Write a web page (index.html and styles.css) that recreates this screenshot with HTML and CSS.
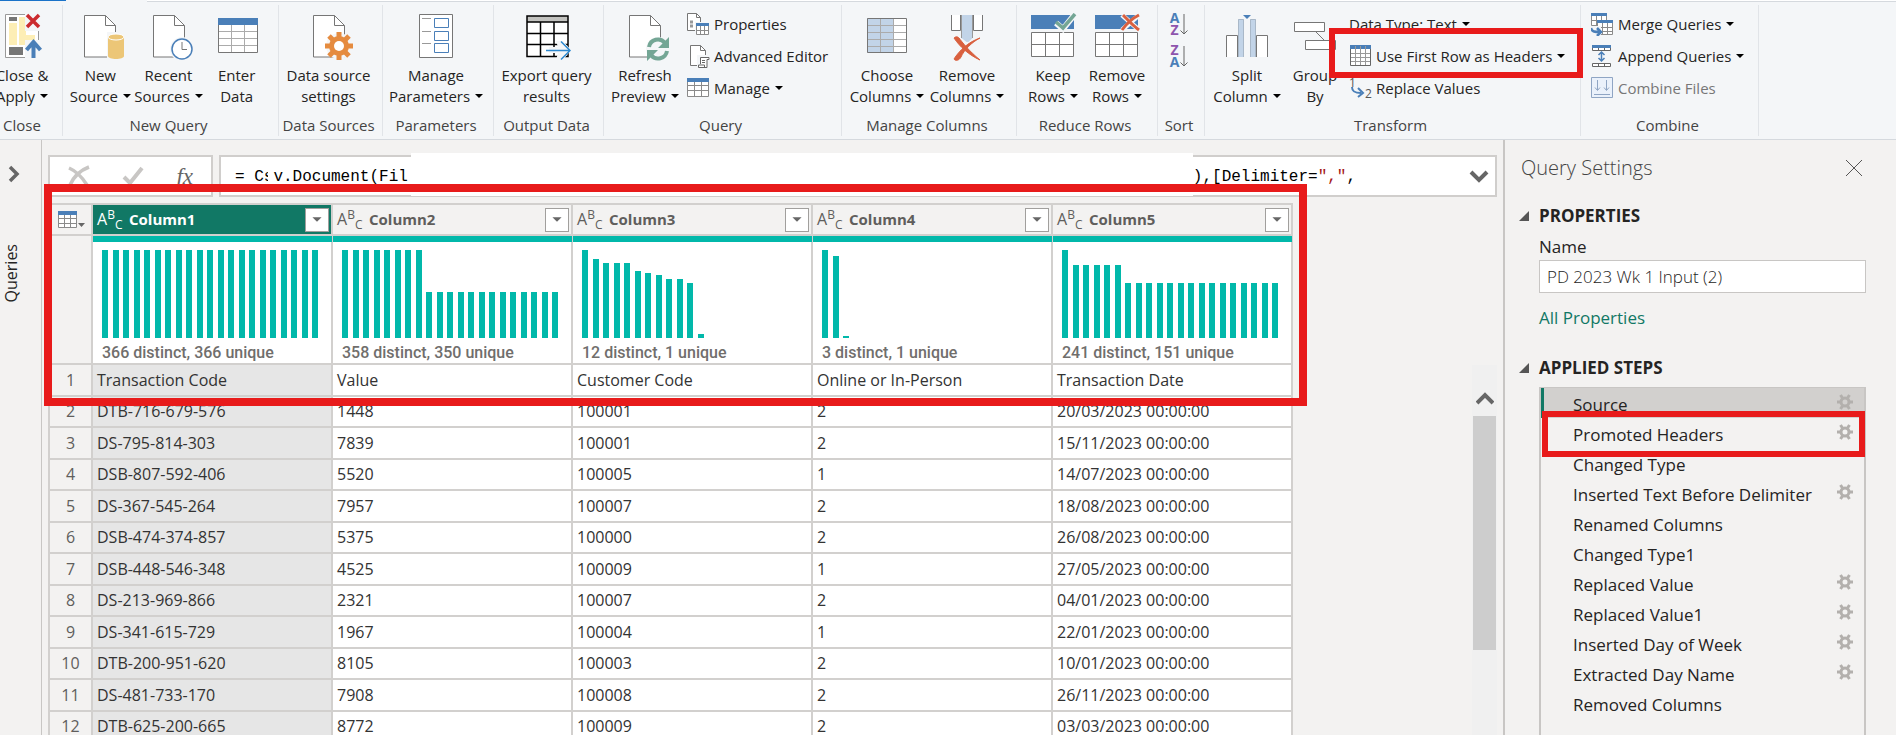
FILE: index.html
```html
<!DOCTYPE html>
<html lang="en">
<head>
    <meta charset="UTF-8">
    <meta name="viewport" content="width=device-width, initial-scale=1.0">
    <title>Power Query Editor</title>
    <link rel="stylesheet" href="styles.css">
</head>
<body>
    <!-- Shared icon shapes -->
    <svg class="sprite" width="0" height="0" aria-hidden="true">
        <symbol id="doc" viewBox="0 0 48 48">
            <path d="M8.5 2.5h21l10 10v31.5h-31z" fill="#fff" stroke="#767676"/>
            <path d="M29.5 2.5v10h10" fill="none" stroke="#767676"/>
        </symbol>
        <symbol id="gear" viewBox="0 0 16 16">
            <path d="M3.500 1l2 3M12.500 1l-2 3M3.500 15l2-3M12.500 15l-2-3M0 8h3M13 8h3" stroke="#b3b0ad" stroke-width="3"/>
            <circle cx="8" cy="8" r="4" fill="none" stroke="#b3b0ad" stroke-width="3"/>
        </symbol>
        <symbol id="rows" viewBox="0 0 48 48">
            <path d="M2 2h43v14H2z" fill="#4a7fb8"/>
            <path d="M2.500 19.500h42v24h-42zM2.500 31.500h42M16.500 19.500v24M30.500 19.500v24" fill="#fff" stroke="#767676"/>
        </symbol>
        <symbol id="filter" viewBox="0 0 24 24">
            <path d="M7 9h10l-5 5z" fill="#666"/>
        </symbol>
    </svg>

    <header class="ribbon">
        <div class="tab-line"><span class="tab-file"></span><span class="tab-home"></span><span class="tab-rest"></span></div>
        <div class="groups">
            <section class="group group-close">
                <div class="group-body">
                    <button class="btn-large">
                        <svg class="icon" viewBox="0 0 48 48">
                            <path d="M7.500 1.500h33v43h-33z" fill="#fff" stroke="#999"/>
                            <path d="M11 4h8v4h-8z" fill="#767676"/><path d="M11 10h8v22h-8zM21 4h7v28h-7zM28 22h9v10h-9z" fill="#fdeeb5"/>
                            <path d="M11 34h14v8H11z" fill="#767676"/>
                            <path d="M27 0h17v18H27zM27 27h18v20H27z" fill="#f4f6f8"/>
                            <path d="M29 2l12 12M41 2L29 14" stroke="#cb2b2f" stroke-width="3.500"/>
                            <path d="M35.500 45V31M28.500 37l7-8 7 8" fill="none" stroke="#4a7fb8" stroke-width="4"/>
                        </svg>
                        <span>Close &amp;<br>Apply<i class="caret"></i></span>
                    </button>
                </div>
                <h2>Close</h2>
            </section>

            <section class="group">
                <div class="group-body">
                    <button class="btn-large">
                        <svg class="icon" viewBox="0 0 48 48">
                            <use href="#doc"/>
                            <path d="M31 19h17v29H31z" fill="#f4f6f8"/>
                            <path d="M32 24v19c0 4 16 4 16 0V24z" fill="#ecc677"/>
                            <ellipse cx="40" cy="24" rx="8" ry="3" fill="#ecc677" stroke="#fff"/>
                        </svg>
                        <span>New<br>Source<i class="caret"></i></span>
                    </button>
                    <button class="btn-large">
                        <svg class="icon" viewBox="0 0 48 48">
                            <use href="#doc"/>
                            <circle cx="37" cy="36" r="12" fill="#f4f6f8"/>
                            <circle cx="37" cy="36" r="10" fill="#fff" stroke="#4a7fb8" stroke-width="1.500"/>
                            <path d="M37 29v7.500h5" fill="none" stroke="#767676"/>
                        </svg>
                        <span>Recent<br>Sources<i class="caret"></i></span>
                    </button>
                    <button class="btn-large">
                        <svg class="icon" viewBox="0 0 48 48">
                            <path d="M5.500 11.500h39v28h-39z" fill="#fff" stroke="#767676"/>
                            <path d="M6 18.500h38M6 25.500h38M6 32.500h38M18.500 12v27M31.500 12v27" stroke="#ababab"/>
                            <path d="M5 5h40v7H5z" fill="#4a7fb8"/>
                        </svg>
                        <span>Enter<br>Data</span>
                    </button>
                </div>
                <h2>New Query</h2>
            </section>

            <section class="group">
                <div class="group-body">
                    <button class="btn-large">
                        <svg class="icon" viewBox="0 0 48 48">
                            <use href="#doc"/>
                            <circle cx="34" cy="33" r="13" fill="#f4f6f8"/>
                            <g stroke="#e58b3f" stroke-width="5"><path d="M34 19v28M20 33h28M24 23l20 20M44 23L24 43"/></g>
                            <circle cx="34" cy="33" r="10" fill="#e58b3f"/><circle cx="34" cy="33" r="5" fill="#fff"/>
                        </svg>
                        <span>Data source<br>settings</span>
                    </button>
                </div>
                <h2>Data Sources</h2>
            </section>

            <section class="group">
                <div class="group-body">
                    <button class="btn-large">
                        <svg class="icon" viewBox="0 0 48 48">
                            <path d="M7.500 1.500h33v43h-33z" fill="#fff" stroke="#767676"/>
                            <path d="M10 5.500h9M10 18.500h9M10 30.500h9" stroke="#999"/>
                            <path d="M22.500 5.500h14v9h-14zM22.500 18.500h14v9h-14zM22.500 30.500h14v9h-14z" fill="none" stroke="#4a7fb8"/>
                        </svg>
                        <span>Manage<br>Parameters<i class="caret"></i></span>
                    </button>
                </div>
                <h2>Parameters</h2>
            </section>

            <section class="group">
                <div class="group-body">
                    <button class="btn-large">
                        <svg class="icon" viewBox="0 0 48 48">
                            <path d="M4 3h41v40H4z" fill="#fff"/><path d="M4 3h41v6H4z" fill="#c2c2bf"/>
                            <path d="M4 3h41v40.500H4zM4 9h41M4 20.500h41M4 31.500h41M17.500 9v34M31 9v34" fill="none" stroke="#000" stroke-width="1.500"/>
                            <path d="M26 34h9l-2-6h7l8 9-8 10h-7l2-7h-9z" fill="#f4f6f8"/>
                            <path d="M23 37.500h24M38 28.500l9 9-9 9" fill="none" stroke="#2b88cf" stroke-width="1.500"/>
                        </svg>
                        <span>Export query<br>results</span>
                    </button>
                </div>
                <h2>Output Data</h2>
            </section>

            <section class="group group-query">
                <div class="group-body">
                    <button class="btn-large">
                        <svg class="icon" viewBox="0 0 48 48">
                            <use href="#doc"/>
                            <circle cx="37" cy="36" r="12" fill="#f4f6f8"/>
                            <path d="M28 34a9 9 0 0 1 16-4M46 38a9 9 0 0 1-16 4" fill="none" stroke="#74a695" stroke-width="4"/>
                            <path d="M48 24v11H37zM26 48V37h11z" fill="#74a695"/>
                        </svg>
                        <span>Refresh<br>Preview<i class="caret"></i></span>
                    </button>
                    <div class="stack">
                        <button class="btn-small">
                            <svg class="icon-small" viewBox="0 0 24 24">
                                <path d="M.5 1.500h9l4 4v13H.5z" fill="#fff" stroke="#767676"/><path d="M9.500 1.500v4h4" fill="none" stroke="#767676"/>
                                <path d="M3 10h3M3 14h3" stroke="#999" stroke-width="3"/>
                                <path d="M8 10h16v14H8z" fill="#f4f6f8"/>
                                <path d="M9.500 12.500h12v10h-12zM9.500 18.500h12M13.500 14v9M17.500 14v9" fill="#fff" stroke="#8a8a8a"/>
                                <path d="M9 11h13v3H9z" fill="#4a7fb8"/>
                            </svg>
                            Properties
                        </button>
                        <button class="btn-small">
                            <svg class="icon-small" viewBox="0 0 24 24">
                                <path d="M3.500 1.500h10l5 5v15h-15z" fill="#fff" stroke="#767676"/><path d="M13.500 1.500v5h5" fill="none" stroke="#767676"/>
                                <path d="M10 11h14v13H10z" fill="#f4f6f8"/>
                                <path d="M13.500 20V13.500h8.500v2h-2V23.500h-8.500v-2.500h6v2.500M15 16.500h3M15 18.500h3" fill="#fff" stroke="#666"/>
                            </svg>
                            Advanced Editor
                        </button>
                        <button class="btn-small">
                            <svg class="icon-small" viewBox="0 0 24 24">
                                <path d="M.5 3.500h21v17H.5zM1 9.500h20M1 14.500h20M7.500 5v15M14.500 5v15" fill="#fff" stroke="#8a8a8a"/>
                                <path d="M0 2h22v4H0z" fill="#4a7fb8"/>
                            </svg>
                            Manage<i class="caret"></i>
                        </button>
                    </div>
                </div>
                <h2>Query</h2>
            </section>

            <section class="group group-columns">
                <div class="group-body">
                    <button class="btn-large">
                        <svg class="icon" viewBox="0 0 48 48">
                            <path d="M4 5h27v35H4z" fill="#c2d4e8"/><path d="M31 5h13v35H31z" fill="#fff"/>
                            <path d="M4 12.500h40M4 19.500h40M4 26.500h40M4 33.500h40M17.500 5v35M30.500 5v35" stroke="#ababab"/>
                            <path d="M4.500 5.500h39v34h-39z" fill="none" stroke="#767676"/>
                        </svg>
                        <span>Choose<br>Columns<i class="caret"></i></span>
                    </button>
                    <button class="btn-large">
                        <svg class="icon" viewBox="0 0 48 48">
                            <path d="M8.500 2v15.500h9V2M30.500 2v15.500h9V2" fill="#fff" stroke="#767676"/>
                            <path d="M18.500 2v23l5 4h2l4-4V2z" fill="#c2d4e8"/>
                            <path d="M18.500 2v23M29.500 2v23" stroke="#999"/>
                            <path d="M11 25c2-2 4-1 5 0 3 4 10 13 21 22-11-5-20-13-26-22zM37 25c-8 4-16 12-19 19-2 4-6 4-7 2 5-8 14-17 26-21z" fill="#d9603f" stroke="#d9603f"/>
                        </svg>
                        <span>Remove<br>Columns<i class="caret"></i></span>
                    </button>
                </div>
                <h2>Manage Columns</h2>
            </section>

            <section class="group group-rows">
                <div class="group-body">
                    <button class="btn-large">
                        <svg class="icon" viewBox="0 0 48 48">
                            <use href="#rows"/>
                            <path d="M27 10l7 6L46 1" fill="none" stroke="#f4f6f8" stroke-width="6"/>
                            <path d="M27 9l7 6L46 1" fill="none" stroke="#74a695" stroke-width="3.500"/>
                        </svg>
                        <span>Keep<br>Rows<i class="caret"></i></span>
                    </button>
                    <button class="btn-large">
                        <svg class="icon" viewBox="0 0 48 48">
                            <use href="#rows"/>
                            <path d="M29 2l17 15M46 2L29 17" stroke="#f4f6f8" stroke-width="5"/>
                            <path d="M30 2c4 4 9 10 16 15M46 2c-8 4-12 8-17 15" fill="none" stroke="#d9603f" stroke-width="3"/>
                        </svg>
                        <span>Remove<br>Rows<i class="caret"></i></span>
                    </button>
                </div>
                <h2>Reduce Rows</h2>
            </section>

            <section class="group">
                <div class="group-body">
                    <div class="stack">
                        <button class="btn-small btn-sort" aria-label="Sort ascending">
                            <span class="letters"><b class="letter-a">A</b><b class="letter-z">Z</b></span>
                            <svg class="arrow" viewBox="0 0 8 24"><path d="M4 2v20M.5 18.500L4 22l3.500-3.500" fill="none" stroke="#666"/></svg>
                        </button>
                        <button class="btn-small btn-sort" aria-label="Sort descending">
                            <span class="letters"><b class="letter-z">Z</b><b class="letter-a">A</b></span>
                            <svg class="arrow" viewBox="0 0 8 24"><path d="M4 2v20M.5 18.500L4 22l3.500-3.500" fill="none" stroke="#666"/></svg>
                        </button>
                    </div>
                </div>
                <h2>Sort</h2>
            </section>

            <section class="group group-transform">
                <div class="group-body">
                    <button class="btn-large">
                        <svg class="icon" viewBox="0 0 48 48">
                            <path d="M3.500 44V22.500h11V44M33.500 44V22.500h11V44" fill="#fff" stroke="#767676"/>
                            <path d="M15 6h6v38h-6zM27 6h6v38h-6z" fill="#c2d4e8"/>
                            <path d="M15.500 44V6.500h5V44M27.500 44V6.500h5V44" fill="none" stroke="#a9b8c8"/>
                            <path d="M20 2h8l-4 4z" fill="#4a7fb8"/>
                        </svg>
                        <span>Split<br>Column<i class="caret"></i></span>
                    </button>
                    <button class="btn-large">
                        <svg class="icon" viewBox="0 0 48 48">
                            <path d="M3.500 9.500h30v9h-30zM14.500 27.500h30v9h-30z" fill="#fff" stroke="#767676"/>
                            <path d="M25 19l8 8" stroke="#767676"/>
                        </svg>
                        <span>Group<br>By</span>
                    </button>
                    <div class="stack">
                        <button class="btn-small">Data Type: Text<i class="caret"></i></button>
                        <button class="btn-small">
                            <svg class="icon-small" viewBox="0 0 24 24">
                                <path d="M1.500 1.500h20v20h-20z" fill="#fff" stroke="#666"/>
                                <path d="M1 1h21v4H1z" fill="#4a7fb8"/>
                                <path d="M2 9.500h19M2 13.500h19M2 17.500h19M6.500 2v19M11.500 2v19M16.500 2v19" stroke="#999"/>
                            </svg>
                            Use First Row as Headers<i class="caret"></i>
                        </button>
                        <button class="btn-small">
                            <svg class="icon-small" viewBox="0 0 24 24">
                                <text x="0" y="11" class="digit">1</text><text x="16" y="22" class="digit">2</text>
                                <path d="M3 11c0 4 2 6 9 6M9 12l5 5-5 4" fill="none" stroke="#4a7fb8" stroke-width="2"/>
                            </svg>
                            Replace Values
                        </button>
                    </div>
                </div>
                <h2>Transform</h2>
                <div class="mark mark-headers"></div>
            </section>

            <section class="group group-combine">
                <div class="group-body">
                    <div class="stack">
                        <button class="btn-small">
                            <svg class="icon-small" viewBox="0 0 24 24">
                                <path d="M.5 2.500h15v11H.5zM1 8.500h14M5.500 4v10M10.500 4v10" fill="#fff" stroke="#8a8a8a"/><path d="M0 1h16v3H0z" fill="#4a7fb8"/>
                                <path d="M6.500 9.500h15v13h-15zM7 15.500h14M7 19.500h14M11.500 10v13M16.500 10v13" fill="#fff" stroke="#8a8a8a"/><path d="M6 8h16v3H6z" fill="#4a7fb8"/>
                                <path d="M0 14h10v9H0z" fill="#f4f6f8"/>
                                <path d="M0 16c1 4 4 4 9 4M6 16l4 4-4 4" fill="none" stroke="#4a7fb8" stroke-width="2.500"/>
                            </svg>
                            Merge Queries<i class="caret"></i>
                        </button>
                        <button class="btn-small">
                            <svg class="icon-small" viewBox="0 0 24 24">
                                <path d="M1.500 3.500h18v3h-18zM7.500 3v3M13.500 3v3M1.500 19.500h18v3h-18zM7.500 19v4M13.500 19v4" fill="#fff" stroke="#666"/>
                                <path d="M1 1h19v3H1z" fill="#4a7fb8"/>
                                <path d="M10.500 8v9M7.500 11l3-3 3 3M7.500 14l3 3 3-3" fill="none" stroke="#4a7fb8" stroke-width="1.500"/>
                            </svg>
                            Append Queries<i class="caret"></i>
                        </button>
                        <button class="btn-small" disabled>
                            <svg class="icon-small" viewBox="0 0 24 24">
                                <path d="M.5 1.500h21v20H.5z" fill="#eaf1fb" stroke="#8fa5c4"/>
                                <path d="M6.500 4v10M4 11.500l2.500 3 2.500-3M15.500 4v10M13 11.500l2.500 3 2.500-3M3 18.500h16" fill="none" stroke="#8fa5c4"/>
                            </svg>
                            Combine Files
                        </button>
                    </div>
                </div>
                <h2>Combine</h2>
            </section>
        </div>
    </header>

    <div class="workspace">
        <nav class="rail">
            <button class="rail-toggle" aria-label="Expand queries">
                <svg width="12" height="18" viewBox="0 0 12 18"><path d="M2 2l7 7-7 7" fill="none" stroke="#666" stroke-width="3.500"/></svg>
            </button>
            <span class="rail-title">Queries</span>
        </nav>

        <main class="main">
            <div class="formula-bar">
                <div class="formula-actions">
                    <button aria-label="Cancel">
                        <svg width="22" height="22" viewBox="0 0 22 22"><path d="M1 3c7 3 13 9 18 17M21 2C13 5 6 11 2 20" fill="none" stroke="#c8c6c4" stroke-width="3.500"/></svg>
                    </button>
                    <button aria-label="Apply">
                        <svg width="22" height="22" viewBox="0 0 22 22"><path d="M2 12l6 6L20 3" fill="none" stroke="#c8c6c4" stroke-width="4"/></svg>
                    </button>
                    <button class="fx" aria-label="Add step">fx</button>
                </div>
                <div class="formula" role="textbox" aria-label="Formula">
                    <code>= Cs<span class="gap"></span>v.Document(Fil</code>
                    <span class="blank"></span>
                    <code>),[Delimiter=<em>","</em>,</code>
                    <button class="formula-expand" aria-label="Expand formula">
                        <svg width="20" height="14" viewBox="0 0 20 14"><path d="M2 3l8 8 8-8" fill="none" stroke="#666" stroke-width="4"/></svg>
                    </button>
                </div>
            </div>

            <div class="preview">
                <table class="data">
                    <thead>
                        <tr class="names">
                            <th class="num">
                                <button class="corner" aria-label="Table menu">
                                    <svg width="28" height="20" viewBox="0 0 28 20">
                                        <path d="M.5 2.500h18v15H.5zM1 8.500h17M1 13.500h17M6.500 4v13M12.500 4v13" fill="#fff" stroke="#8a8a8a"/>
                                        <path d="M0 1h19v4H0z" fill="#4a7fb8"/><path d="M20 13h7l-3.500 4z" fill="#666"/>
                                    </svg>
                                </button>
                            </th>
                            <th class="selected"><div class="name"><span class="abc">A<sup>B</sup><sub>C</sub></span>Column1<button aria-label="Filter Column1"><svg><use href="#filter"/></svg></button></div></th>
                            <th><div class="name"><span class="abc">A<sup>B</sup><sub>C</sub></span>Column2<button aria-label="Filter Column2"><svg><use href="#filter"/></svg></button></div></th>
                            <th><div class="name"><span class="abc">A<sup>B</sup><sub>C</sub></span>Column3<button aria-label="Filter Column3"><svg><use href="#filter"/></svg></button></div></th>
                            <th><div class="name"><span class="abc">A<sup>B</sup><sub>C</sub></span>Column4<button aria-label="Filter Column4"><svg><use href="#filter"/></svg></button></div></th>
                            <th><div class="name"><span class="abc">A<sup>B</sup><sub>C</sub></span>Column5<button aria-label="Filter Column5"><svg><use href="#filter"/></svg></button></div></th>
                        </tr>
                        <tr class="profile">
                            <td class="num"></td>
                            <td><div class="quality"></div><div class="bars"></div><p>366 distinct, 366 unique</p></td>
                            <td><div class="quality"></div><div class="bars"></div><p>358 distinct, 350 unique</p></td>
                            <td><div class="quality"></div><div class="bars"></div><p>12 distinct, 1 unique</p></td>
                            <td><div class="quality"></div><div class="bars"></div><p>3 distinct, 1 unique</p></td>
                            <td><div class="quality"></div><div class="bars"></div><p>241 distinct, 151 unique</p></td>
                        </tr>
                    </thead>
                    <tbody>
                        <tr><th class="num">1</th><td>Transaction Code</td><td>Value</td><td>Customer Code</td><td>Online or In-Person</td><td>Transaction Date</td></tr>
                        <tr><th class="num">2</th><td>DTB-716-679-576</td><td>1448</td><td>100001</td><td>2</td><td>20/03/2023 00:00:00</td></tr>
                        <tr><th class="num">3</th><td>DS-795-814-303</td><td>7839</td><td>100001</td><td>2</td><td>15/11/2023 00:00:00</td></tr>
                        <tr><th class="num">4</th><td>DSB-807-592-406</td><td>5520</td><td>100005</td><td>1</td><td>14/07/2023 00:00:00</td></tr>
                        <tr><th class="num">5</th><td>DS-367-545-264</td><td>7957</td><td>100007</td><td>2</td><td>18/08/2023 00:00:00</td></tr>
                        <tr><th class="num">6</th><td>DSB-474-374-857</td><td>5375</td><td>100000</td><td>2</td><td>26/08/2023 00:00:00</td></tr>
                        <tr><th class="num">7</th><td>DSB-448-546-348</td><td>4525</td><td>100009</td><td>1</td><td>27/05/2023 00:00:00</td></tr>
                        <tr><th class="num">8</th><td>DS-213-969-866</td><td>2321</td><td>100007</td><td>2</td><td>04/01/2023 00:00:00</td></tr>
                        <tr><th class="num">9</th><td>DS-341-615-729</td><td>1967</td><td>100004</td><td>1</td><td>22/01/2023 00:00:00</td></tr>
                        <tr><th class="num">10</th><td>DTB-200-951-620</td><td>8105</td><td>100003</td><td>2</td><td>10/01/2023 00:00:00</td></tr>
                        <tr><th class="num">11</th><td>DS-481-733-170</td><td>7908</td><td>100008</td><td>2</td><td>26/11/2023 00:00:00</td></tr>
                        <tr><th class="num">12</th><td>DTB-625-200-665</td><td>8772</td><td>100009</td><td>2</td><td>03/03/2023 00:00:00</td></tr>
                    </tbody>
                </table>
                <div class="scrollbar">
                    <svg width="18" height="14" viewBox="0 0 18 14"><path d="M1 12l8-8 8 8" fill="none" stroke="#666" stroke-width="4"/></svg>
                    <div class="thumb"></div>
                </div>
                <div class="mark mark-table"></div>
            </div>
        </main>

        <aside class="settings">
            <div class="settings-head">
                <h1>Query Settings</h1>
                <button aria-label="Close">
                    <svg width="18" height="18" viewBox="0 0 18 18"><path d="M1 1l16 16M17 1L1 17" stroke="#555"/></svg>
                </button>
            </div>
            <h3>PROPERTIES</h3>
            <div class="properties">
                <label for="query-name">Name</label>
                <input id="query-name" type="text" value="PD 2023 Wk 1 Input (2)">
                <a href="#">All Properties</a>
            </div>
            <h3>APPLIED STEPS</h3>
            <ul class="steps">
                <li class="current">Source<svg><use href="#gear"/></svg></li>
                <li>Promoted Headers<svg><use href="#gear"/></svg><div class="mark mark-step"></div></li>
                <li>Changed Type</li>
                <li>Inserted Text Before Delimiter<svg><use href="#gear"/></svg></li>
                <li>Renamed Columns</li>
                <li>Changed Type1</li>
                <li>Replaced Value<svg><use href="#gear"/></svg></li>
                <li>Replaced Value1<svg><use href="#gear"/></svg></li>
                <li>Inserted Day of Week<svg><use href="#gear"/></svg></li>
                <li>Extracted Day Name<svg><use href="#gear"/></svg></li>
                <li>Removed Columns</li>
            </ul>
        </aside>
    </div>

    <script>
        // Bar heights of each column distribution, in pixels
        const distributions = [
            Array(21).fill(88),
            [...Array(8).fill(88), ...Array(13).fill(46)],
            [88, 79, 75, 75, 75, 67, 65, 63, 59, 59, 55, 4],
            [88, 82, 2],
            [88, ...Array(5).fill(73), ...Array(15).fill(55)]
        ];

        document.querySelectorAll('.bars').forEach((chart, i) => {
            distributions[i].forEach((height) => {
                const bar = document.createElement('span');
                bar.style.height = height + 'px';
                chart.appendChild(bar);
            });
        });
    </script>
</body>
</html>
```

FILE: styles.css
```css
* {
    box-sizing: border-box;
}
body {
    font-family: "Open Sans", "Noto Sans", sans-serif;
    font-size: 15px;
    line-height: 21px;
    color: #252423;
    background-color: #f3f2f1;
    margin: 0;
    height: 100vh;
    display: flex;
    flex-direction: column;
    overflow: hidden;
}
button {
    font: inherit;
    color: inherit;
    background: none;
    border: none;
    padding: 0;
    cursor: pointer;
}
h1, h2, h3, p, ul {
    margin: 0;
    padding: 0;
}
svg {
    display: block;
    flex: none;
}
.sprite {
    position: absolute;
}
.caret {
    display: inline-block;
    border: 4px solid transparent;
    border-top-color: #000;
    border-bottom: none;
    margin-left: 5px;
    vertical-align: 4px;
}

/* Red highlight frames */
.mark {
    position: absolute;
    border: 6px solid #e81b1b;
    pointer-events: none;
}
.mark-headers {
    left: 124px;
    top: 23px;
    width: 254px;
    height: 50px;
    z-index: 1;
}
.mark-table {
    left: -4px;
    top: -19px;
    width: 1263px;
    height: 222px;
    border-width: 8px;
}
.mark-step {
    left: 1px;
    right: -1px;
    top: -7px;
    height: 46px;
}

/* Ribbon */
.ribbon {
    background-color: #f4f6f8;
    border-bottom: 1px solid #d5d9de;
}
.tab-line {
    display: flex;
    height: 2px;
}
.tab-file {
    width: 66px;
    border-top: 1px solid #1a73c9;
}
.tab-home {
    width: 81px;
}
.tab-rest {
    flex: 1;
    background-color: #fff;
    border-bottom: 1px solid #d5d9de;
}
.groups {
    display: grid;
    grid-template-columns: 63px 216px 104px 111px 110px 238px 175px 141px 47px 376px 178px;
    padding: 3px 0;
}
.group {
    position: relative;
    height: 131px;
    padding-right: 4px;
    border-right: 1px solid #e1e4e8;
}
.group h2 {
    font-size: 15px;
    font-weight: normal;
    color: #444;
    text-align: center;
    white-space: nowrap;
}
.group-body {
    display: flex;
    justify-content: center;
    height: 110px;
}
.group-close {
    padding-right: 18px;
    overflow: hidden;
}
.btn-large {
    flex: none;
    display: flex;
    flex-direction: column;
    align-items: center;
    gap: 4px;
    min-width: 68px;
    padding-top: 8px;
    white-space: nowrap;
}
.group-columns .btn-large {
    min-width: 80px;
}
.group-rows .btn-large {
    min-width: 64px;
}
.icon {
    width: 48px;
    height: 48px;
}
.stack {
    display: flex;
    flex-direction: column;
    padding-top: 3px;
}
.btn-small {
    display: flex;
    align-items: center;
    height: 32px;
    white-space: nowrap;
}
.btn-small:disabled {
    color: #777;
}
.icon-small {
    width: 24px;
    height: 24px;
    margin-right: 3px;
}
.group-query .group-body,
.group-transform .group-body,
.group-combine .group-body {
    justify-content: flex-start;
}
.group-query .group-body {
    padding-left: 7px;
    gap: 8px;
}
.group-transform .group-body {
    padding-left: 8px;
}
.group-combine .group-body {
    padding-left: 10px;
}
.btn-sort {
    gap: 1px;
}
.letters {
    display: flex;
    flex-direction: column;
    font-size: 14px;
    line-height: 12px;
}
.letter-a {
    color: #4a7fb8;
}
.letter-z {
    color: #8e55ad;
}
.arrow {
    width: 8px;
    height: 24px;
}
.digit {
    font-size: 12px;
    fill: #555;
}

/* Workspace */
.workspace {
    flex: 1;
    min-height: 0;
    display: grid;
    grid-template-columns: 42px 1fr 393px;
}
.rail {
    display: flex;
    flex-direction: column;
    align-items: flex-start;
    gap: 61px;
    padding: 25px 0 0 4px;
    border-right: 1px solid #c8c6c4;
}
.rail-toggle {
    padding-left: 4px;
}
.rail-title {
    writing-mode: vertical-rl;
    transform: rotate(180deg);
    font-size: 16px;
    line-height: 14px;
}
.main {
    min-width: 0;
    padding: 15px 6px 0;
    overflow: hidden;
}
.formula-bar {
    display: flex;
    gap: 6px;
    margin-bottom: 6px;
}
.formula-actions {
    display: flex;
    align-items: center;
    justify-content: space-between;
    width: 165px;
    height: 42px;
    padding: 0 18px;
    background-color: #fff;
    border: 2px solid #d0cecc;
}
.fx {
    font-family: "Liberation Serif", serif;
    font-size: 23px;
    font-style: italic;
    color: #666;
}
.formula {
    flex: 1;
    display: flex;
    align-items: center;
    height: 42px;
    padding: 0 6px 0 14px;
    background-color: #fff;
    border: 2px solid #d0cecc;
}
.formula code {
    padding-top: 3px;
    font-family: "Liberation Mono", monospace;
    font-size: 16px;
    color: #000;
    white-space: pre;
}
.formula em {
    font-style: normal;
    color: #a31515;
}
.gap {
    display: inline-block;
    width: 5px;
    height: 16px;
    margin-left: -5px;
    background-color: #fff;
    vertical-align: middle;
}
.blank {
    width: 782px;
    height: 43px;
    margin: -4px 0 0 3px;
    background-color: #fff;
}
.formula-expand {
    margin-left: auto;
}

/* Data preview */
.preview {
    position: relative;
    display: flex;
    align-items: flex-start;
    justify-content: space-between;
}
.data {
    table-layout: fixed;
    width: 1245px;
    border-collapse: separate;
    border-spacing: 0;
    border: solid #d2d0ce;
    border-width: 2px 0 0 2px;
}
.data th,
.data td {
    height: 31px;
    padding: 0 4px;
    border: solid #d2d0ce;
    border-width: 0 2px 2px 0;
    text-align: left;
    background-color: #fff;
    color: #333;
}
.data td {
    font-size: 16px;
}
.data tbody tr:nth-child(odd) td {
    height: 32px;
}
.data tbody td:nth-child(2) {
    background-color: #e6e6e6;
}
.data .num {
    width: 43px;
    padding: 0;
    background-color: #f3f2f1;
    color: #605e5c;
    font-size: 16px;
    font-weight: normal;
    text-align: center;
}
.data .names th {
    background-color: #f3f2f1;
    color: #605e5c;
}
.data .names .selected {
    background-color: #117865;
    color: #fff;
}
.corner {
    display: block;
    margin-left: 8px;
}
.name {
    display: flex;
    align-items: center;
    height: 29px;
    margin-right: -2px;
}
.name button {
    margin-left: auto;
    background-color: #fff;
    border: 1px solid #a19f9d;
}
.name svg {
    width: 22px;
    height: 22px;
}
.abc {
    width: 32px;
    font-size: 16px;
    font-weight: normal;
}
.abc sup,
.abc sub {
    font-size: 12px;
    line-height: 0;
}
.abc sup {
    vertical-align: 6px;
}
.abc sub {
    vertical-align: -4px;
}
.data .profile td {
    height: 129px;
    padding: 0;
    vertical-align: top;
}
.quality {
    height: 6px;
    margin-right: -1px;
    background-color: #01b8aa;
}
.bars {
    display: grid;
    grid-template-columns: repeat(21, 6px);
    justify-content: space-between;
    align-items: end;
    width: 216px;
    height: 88px;
    margin: 8px 9px 4px;
}
.bars span {
    background-color: #01b8aa;
}
.profile p {
    padding-left: 9px;
    font-family: Roboto, sans-serif;
    font-weight: 500;
    color: #706e6c;
}
.scrollbar {
    display: flex;
    flex-direction: column;
    align-items: center;
    gap: 11px;
    width: 25px;
    height: 400px;
    margin-top: 162px;
    padding-top: 26px;
    background-color: #f0f0f0;
}
.thumb {
    width: 23px;
    height: 234px;
    background-color: #cdcdcd;
}

/* Query settings */
.settings {
    display: flex;
    flex-direction: column;
    padding: 15px 30px 0 34px;
    border-left: 2px solid #c8c6c4;
    font-size: 17px;
}
.settings-head {
    display: flex;
    align-items: center;
    justify-content: space-between;
    margin: 0 3px 24px -18px;
}
.settings h1 {
    font-size: 20px;
    line-height: 26px;
    font-weight: 300;
    color: #444;
}
.settings h3 {
    font-size: 17px;
    font-weight: bold;
}
.settings h3::before {
    content: "";
    float: left;
    margin: 6px 0 0 -20px;
    border: 5px solid #555;
    border-top-color: transparent;
    border-left-color: transparent;
}
.properties {
    display: flex;
    flex-direction: column;
    margin: 10px 0 29px;
}
.properties input {
    height: 33px;
    margin: 3px 0 14px;
    padding: 0 7px;
    border: 1px solid #c8c6c4;
    font: inherit;
    font-weight: 300;
    color: #252423;
    background-color: #fff;
}
.properties a {
    color: #117865;
    text-decoration: none;
}
.steps {
    flex: 1;
    list-style: none;
    margin-top: 9px;
    border: solid #c8c6c4;
    border-width: 1px 2px 0;
}
.steps li {
    position: relative;
    display: flex;
    align-items: center;
    justify-content: space-between;
    height: 30px;
    padding: 2px 11px 0 32px;
}
.steps svg {
    width: 16px;
    height: 16px;
    margin-bottom: 4px;
}
.steps .current {
    background-color: #d2d0ce;
    border-left: 3px solid #117865;
    padding-left: 29px;
}
```
